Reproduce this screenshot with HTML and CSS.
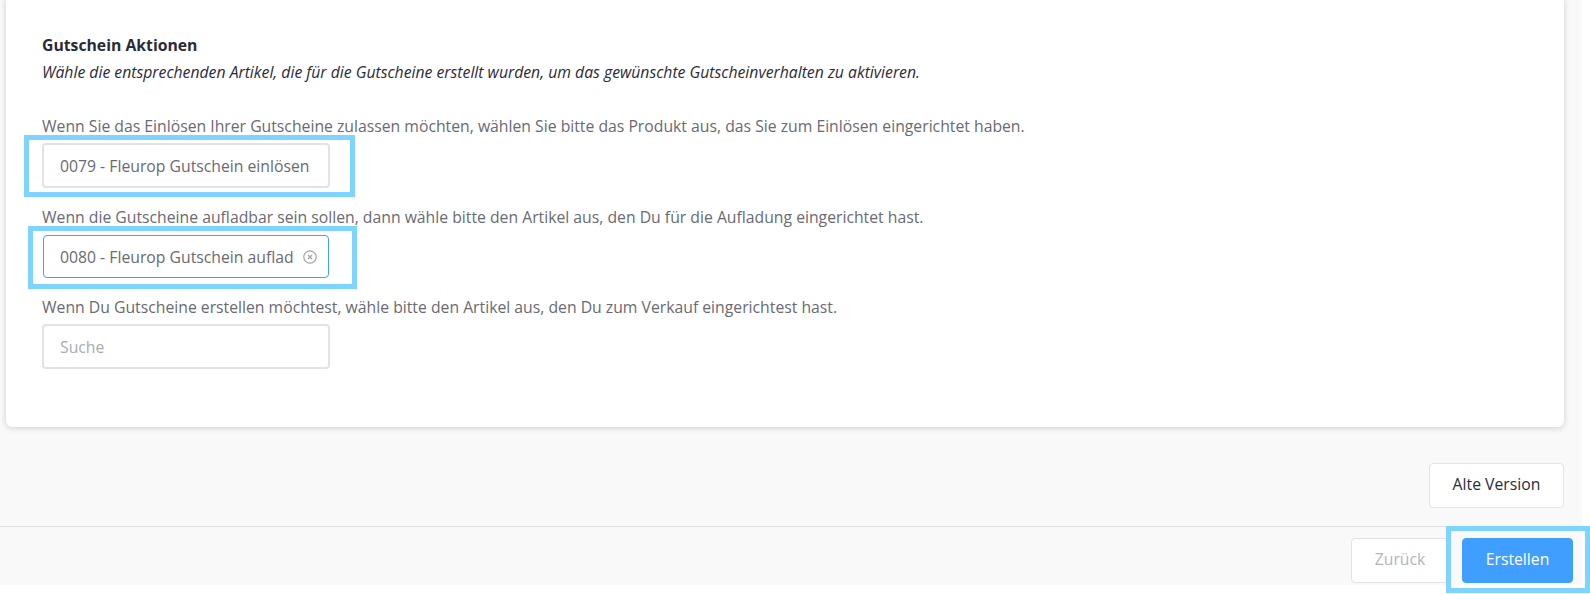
FILE: index.html
```html
<!DOCTYPE html>
<html lang="de">
<head>
  <meta charset="UTF-8" />
  <title>Gutschein Aktionen</title>
  <link rel="stylesheet" href="styles.css">
</head>
<body>
  <div class="page">
    <div class="card">
      <h2>Gutschein Aktionen</h2>
      <p class="intro">Wähle die entsprechenden Artikel, die für die Gutscheine erstellt wurden, um das gewünschte Gutscheinverhalten zu aktivieren.</p>

      <label class="field-label first">Wenn Sie das Einlösen Ihrer Gutscheine zulassen möchten, wählen Sie bitte das Produkt aus, das Sie zum Einlösen eingerichtet haben.</label>
      <div class="select">0079 - Fleurop Gutschein einlösen</div>

      <label class="field-label">Wenn die Gutscheine aufladbar sein sollen, dann wähle bitte den Artikel aus, den Du für die Aufladung eingerichtet hast.</label>
      <div class="select focused">
        <span>0080 - Fleurop Gutschein auflad</span>
        <svg class="clear" width="14" height="14" viewBox="0 0 14 14" fill="none" stroke="#a5a5a5">
          <circle cx="7" cy="7" r="6.2" stroke-width="1.2" />
          <path d="M5 5l4 4M9 5l-4 4" stroke-width="1.3" />
        </svg>
      </div>

      <label class="field-label">Wenn Du Gutscheine erstellen möchtest, wähle bitte den Artikel aus, den Du zum Verkauf eingerichtest hast.</label>
      <div class="select placeholder">Suche</div>
    </div>

    <div class="old-version">
      <button class="btn">Alte Version</button>
    </div>

    <div class="footer">
      <button class="btn disabled">Zurück</button>
      <button class="btn primary">Erstellen</button>
    </div>
  </div>

  <!-- annotation frames drawn on top of the screenshot -->
  <div class="frame frame-one"></div>
  <div class="frame frame-two"></div>
  <div class="frame frame-three"></div>
</body>
</html>
```

FILE: styles.css
```css
* {
  box-sizing: border-box;
}

html, body {
  margin: 0;
  padding: 0;
  height: 594px;
  overflow: hidden;
  background-color: #fff;
}

body {
  position: relative;
  font-family: "Open Sans", "Noto Sans", sans-serif;
  font-size: 15.75px;
  color: #6a6a73;
}

.page {
  width: 1582px;
  height: 585px;
  background-color: #f9f9f9;
  overflow: hidden;
}

.card {
  width: 1558px;
  height: 431px;
  margin: -4px 0 0 6px;
  padding: 39px 36px 0;
  background-color: #fff;
  border-radius: 6px;
  box-shadow: 0 1px 6px rgba(0, 0, 0, 0.18);
}

h2 {
  margin: 0;
  font-size: 15.75px;
  line-height: 20px;
  font-weight: 700;
  color: #2b2b38;
}

.intro {
  margin: 7px 0 0;
  line-height: 20px;
  font-style: italic;
  color: #2b2b38;
}

.field-label {
  display: block;
  margin: 19px 0 0;
  line-height: 20px;
}

.field-label.first {
  margin-top: 34px;
}

.select {
  display: flex;
  align-items: center;
  justify-content: space-between;
  width: 288px;
  height: 45px;
  margin-top: 7px;
  padding: 0 11px 0 16px;
  background-color: #fff;
  border: 2px solid #e1e2ea;
  border-radius: 4px;
  white-space: nowrap;
  overflow: hidden;
}

.select.focused {
  width: 286px;
  height: 43px;
  margin: 8px 1px 1px;
  border: 1px solid #409eff;
}

.select.placeholder {
  color: #a9abb5;
}

.clear {
  flex-shrink: 0;
}

.old-version {
  display: flex;
  justify-content: flex-end;
  width: 1564px;
  margin-top: 36px;
}

.footer {
  display: flex;
  justify-content: flex-end;
  gap: 13px;
  height: 59px;
  margin-top: 18px;
  padding: 11px 9px 0 0;
  border-top: 1px solid #dfe0e6;
}

.btn {
  width: 135px;
  height: 45px;
  padding: 0 0 3px;
  font-family: inherit;
  font-size: 15.75px;
  color: #2b2b38;
  background-color: #fff;
  border: 1px solid #e1e2ea;
  border-radius: 4px;
}

.btn.disabled {
  width: 98px;
  color: #b4b5bf;
}

.btn.primary {
  width: 111px;
  color: #fff;
  background-color: #409eff;
  border-color: #409eff;
}

.frame {
  position: absolute;
  border: 5px solid #7fd4ff;
}

.frame-one {
  left: 24px;
  top: 135px;
  width: 331px;
  height: 62px;
}

.frame-two {
  left: 28px;
  top: 226px;
  width: 329px;
  height: 63px;
}

.frame-three {
  left: 1446px;
  top: 526px;
  width: 144px;
  height: 67px;
}
```
